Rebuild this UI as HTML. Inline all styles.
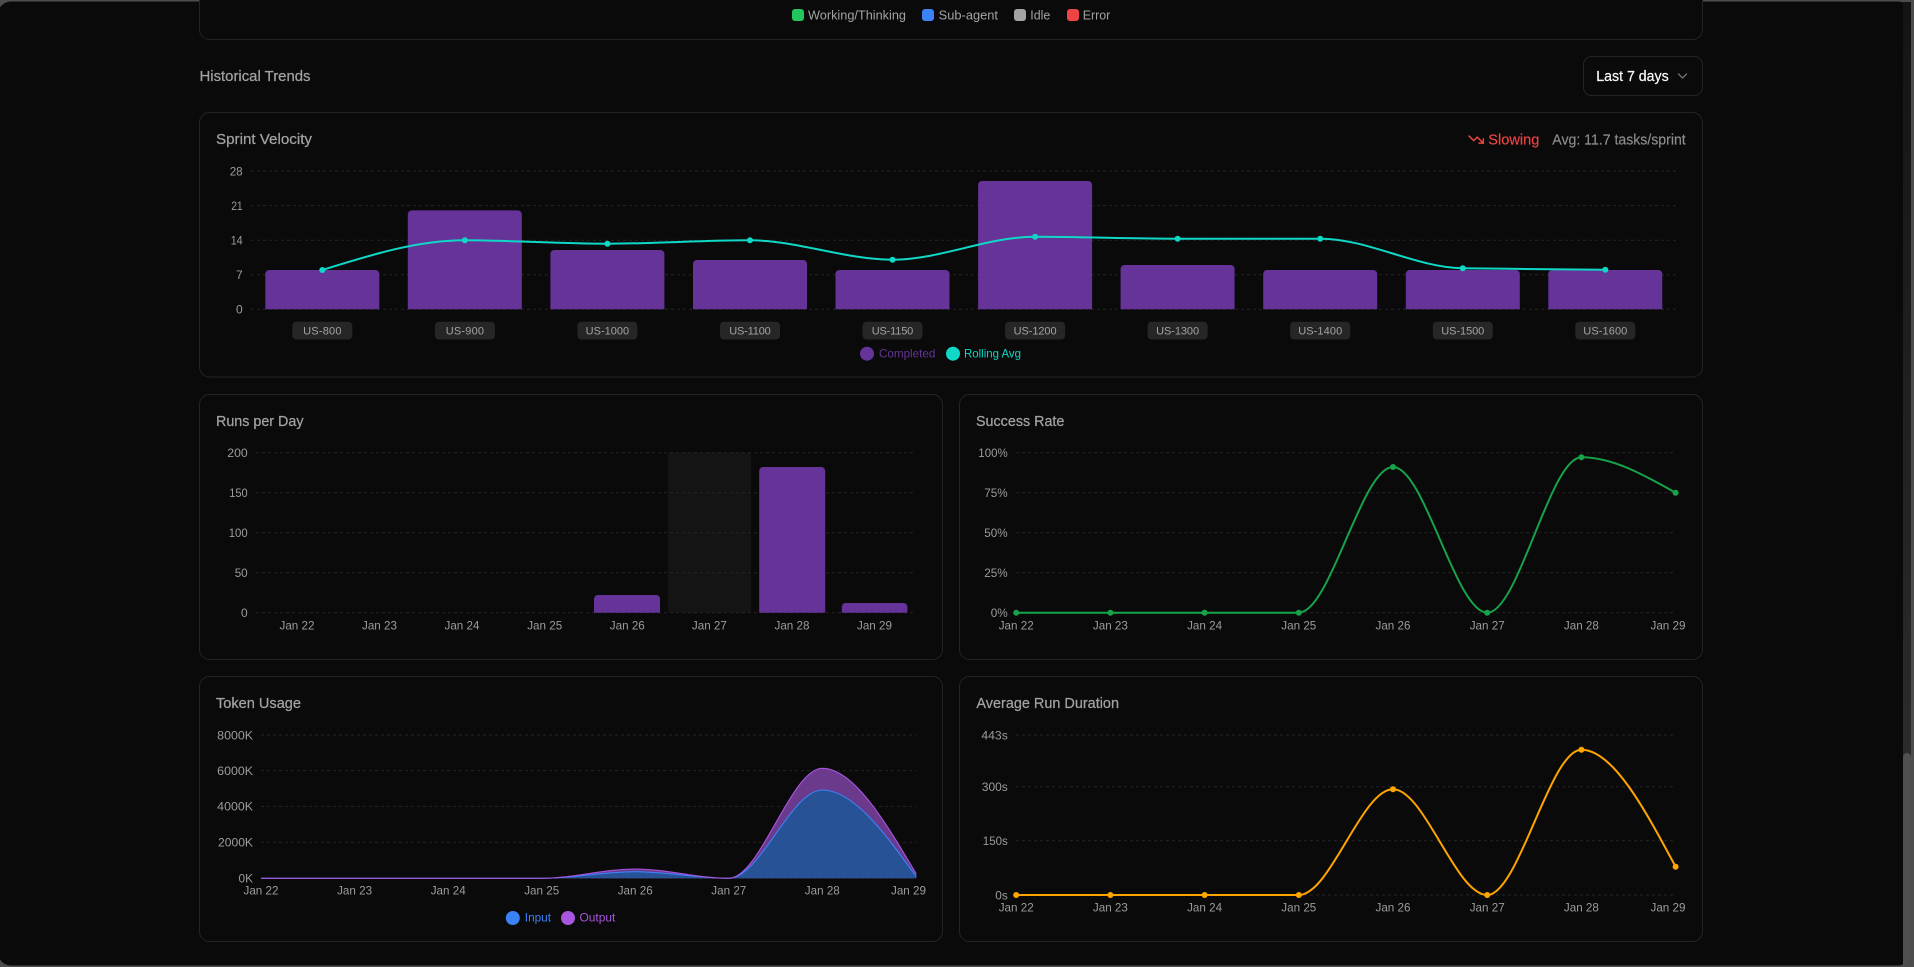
<!DOCTYPE html>
<html lang="en">
<head>
<meta charset="utf-8">
<title>Historical Trends</title>
<style>
html,body{margin:0;padding:0;background:#4d4d4d;width:1914px;height:967px;overflow:hidden}
svg{position:absolute;left:0;top:0;display:block}
text{font-family:"Liberation Sans",Arial,sans-serif}
.card{fill:#0a0a0a;stroke:#242424;stroke-width:1}
.grid{stroke:#252525;stroke-width:1;stroke-dasharray:3 3;fill:none}
.t{font-size:14.4px;fill:#a3a3a3;font-weight:400;stroke:#a3a3a3;stroke-width:.22px}
.ax{font-size:12px;fill:#9c9c9c}
.end{text-anchor:end}
.mid{text-anchor:middle}
.leg{font-size:12.6px;fill:#a3a3a3}
.pill{fill:#262626}
.pt{font-size:11px;fill:#a3a3a3;text-anchor:middle}
.lg{font-size:11.6px}
.bar{fill:#663399}
</style>
</head>
<body>
<svg width="1914" height="967" viewBox="0 0 1914 967" xmlns="http://www.w3.org/2000/svg">
<defs>
<clipPath id="c1"><rect x="200" y="150" width="1500" height="159.3"/></clipPath>
<clipPath id="c2"><rect x="200" y="440" width="740" height="172.7"/></clipPath>
<linearGradient id="tr" x1="0" y1="0" x2="0" y2="1"><stop offset="0" stop-color="#141414"/><stop offset="1" stop-color="#2b2b2b"/></linearGradient>
</defs>
<rect x="0" y="0" width="1914" height="967" fill="#4d4d4d"/>
<rect x="-2" y="1.5" width="1913" height="964" rx="13" fill="#0a0a0a"/>
<rect x="1903" y="2" width="8" height="755" fill="url(#tr)"/>
<path d="M1903,757 a4,4 0 0 1 8,0 V952 a13,13 0 0 1 -8,12.8 Z" fill="#505050"/>

<!-- Top card -->
<path class="card" d="M199.5,-10 V29.5 a10,10 0 0 0 10,10 H1692.5 a10,10 0 0 0 10,-10 V-10"/>
<rect x="792" y="9" width="12" height="12" rx="3" fill="#22c55e"/>
<text class="leg" x="808" y="19.4" textLength="98" lengthAdjust="spacingAndGlyphs">Working/Thinking</text>
<rect x="922" y="9" width="12" height="12" rx="3" fill="#3b82f6"/>
<text class="leg" x="938.7" y="19.4" textLength="59.3" lengthAdjust="spacingAndGlyphs">Sub-agent</text>
<rect x="1014" y="9" width="12" height="12" rx="3" fill="#a3a3a3"/>
<text class="leg" x="1030.3" y="19.4" textLength="20" lengthAdjust="spacingAndGlyphs">Idle</text>
<rect x="1067" y="9" width="12" height="12" rx="3" fill="#ef4444"/>
<text class="leg" x="1082.7" y="19.4" textLength="27.6" lengthAdjust="spacingAndGlyphs">Error</text>

<!-- Header -->
<text class="t" x="199.5" y="81" textLength="111" lengthAdjust="spacingAndGlyphs">Historical Trends</text>
<rect class="card" x="1583.5" y="56.5" width="119" height="39" rx="8"/>
<text x="1596.3" y="81" font-size="14.4" fill="#fafafa" stroke="#fafafa" stroke-width=".2" textLength="72.4" lengthAdjust="spacingAndGlyphs">Last 7 days</text>
<path d="M1678.5,74 l4,4 4,-4" fill="none" stroke="#737373" stroke-width="1.3" stroke-linecap="round" stroke-linejoin="round"/>

<!-- Sprint Velocity -->
<rect class="card" x="199.5" y="112.5" width="1503" height="264.5" rx="10"/>
<text class="t" x="216" y="144" textLength="96" lengthAdjust="spacingAndGlyphs">Sprint Velocity</text>
<g fill="none" stroke="#ef4444" stroke-width="1.5" stroke-linecap="round" stroke-linejoin="round">
<path d="M1469,136 L1473.7,140.65 L1477.25,137.1 L1483.3,143.15"/>
<path d="M1479,143.15 H1483.3 V138.9"/>
</g>
<text x="1488.3" y="144.5" font-size="14.4" fill="#ef4444" stroke="#ef4444" stroke-width=".15" textLength="51" lengthAdjust="spacingAndGlyphs">Slowing</text>
<text x="1552.3" y="144.5" font-size="14.4" fill="#8f8f8f" stroke="#8f8f8f" stroke-width=".15" textLength="133.4" lengthAdjust="spacingAndGlyphs">Avg: 11.7 tasks/sprint</text>

<g class="grid">
<path d="M251,171 H1676.6"/><path d="M251,205.6 H1676.6"/><path d="M251,240.2 H1676.6"/><path d="M251,274.8 H1676.6"/><path d="M251,309.3 H1676.6"/>
</g>
<g class="ax end">
<text x="242.7" y="175.3" textLength="13" lengthAdjust="spacingAndGlyphs">28</text>
<text x="242.7" y="210" textLength="11.5" lengthAdjust="spacingAndGlyphs">21</text>
<text x="242.7" y="244.6" textLength="12" lengthAdjust="spacingAndGlyphs">14</text>
<text x="242.7" y="279.2">7</text>
<text x="242.7" y="313.7">0</text>
</g>
<g class="bar" clip-path="url(#c1)">
<rect x="265.3" y="270" width="114" height="60" rx="4"/>
<rect x="407.8" y="210.4" width="114" height="120" rx="4"/>
<rect x="550.4" y="250" width="114" height="80" rx="4"/>
<rect x="693" y="260" width="114" height="70" rx="4"/>
<rect x="835.5" y="270" width="114" height="60" rx="4"/>
<rect x="978.1" y="181" width="114" height="150" rx="4"/>
<rect x="1120.6" y="265" width="114" height="60" rx="4"/>
<rect x="1263.2" y="270" width="114" height="60" rx="4"/>
<rect x="1405.8" y="270" width="114" height="60" rx="4"/>
<rect x="1548.3" y="270" width="114" height="60" rx="4"/>
</g>
<path d="M322.28,270 C369.8,255.15 417.32,240.3 464.84,240.3 C512.36,240.3 559.88,243.7 607.4,243.7 C654.92,243.7 702.44,240.3 749.96,240.3 C797.48,240.3 845,259.7 892.52,259.7 C940.04,259.7 987.56,236.7 1035.08,236.7 C1082.6,236.7 1130.12,238.7 1177.64,238.7 C1225.16,238.7 1272.68,238.7 1320.2,238.7 C1367.72,238.7 1415.24,267.37 1462.76,268.3 C1510.28,268.77 1557.8,269.47 1605.32,269.7" fill="none" stroke="#0fd8c6" stroke-width="2"/>
<g fill="#0fd8c6">
<circle cx="322.28" cy="270" r="3"/><circle cx="464.84" cy="240.3" r="3"/><circle cx="607.4" cy="243.7" r="3"/><circle cx="749.96" cy="240.3" r="3"/><circle cx="892.52" cy="259.7" r="3"/><circle cx="1035.08" cy="236.7" r="3"/><circle cx="1177.64" cy="238.7" r="3"/><circle cx="1320.2" cy="238.7" r="3"/><circle cx="1462.76" cy="268.3" r="3"/><circle cx="1605.32" cy="269.7" r="3"/>
</g>
<g class="pill">
<rect x="292.3" y="321.7" width="60" height="17.8" rx="4"/><rect x="434.9" y="321.7" width="60" height="17.8" rx="4"/><rect x="577.4" y="321.7" width="60" height="17.8" rx="4"/><rect x="720" y="321.7" width="60" height="17.8" rx="4"/><rect x="862.5" y="321.7" width="60" height="17.8" rx="4"/><rect x="1005.1" y="321.7" width="60" height="17.8" rx="4"/><rect x="1147.6" y="321.7" width="60" height="17.8" rx="4"/><rect x="1290.2" y="321.7" width="60" height="17.8" rx="4"/><rect x="1432.8" y="321.7" width="60" height="17.8" rx="4"/><rect x="1575.3" y="321.7" width="60" height="17.8" rx="4"/>
</g>
<text class="pt" x="322.3" y="334.4" textLength="38.3" lengthAdjust="spacing">US-800</text>
<text class="pt" x="464.9" y="334.4" textLength="38.3" lengthAdjust="spacing">US-900</text>
<text class="pt" x="607.4" y="334.4" textLength="43.5" lengthAdjust="spacing">US-1000</text>
<text class="pt" x="750" y="334.4" textLength="41.5" lengthAdjust="spacing">US-1100</text>
<text class="pt" x="892.5" y="334.4" textLength="41.5" lengthAdjust="spacing">US-1150</text>
<text class="pt" x="1035.1" y="334.4" textLength="43" lengthAdjust="spacing">US-1200</text>
<text class="pt" x="1177.6" y="334.4" textLength="43" lengthAdjust="spacing">US-1300</text>
<text class="pt" x="1320.2" y="334.4" textLength="44" lengthAdjust="spacing">US-1400</text>
<text class="pt" x="1462.8" y="334.4" textLength="43" lengthAdjust="spacing">US-1500</text>
<text class="pt" x="1605.3" y="334.4" textLength="44" lengthAdjust="spacing">US-1600</text>
<circle cx="867" cy="353.7" r="7" fill="#663399"/>
<text class="lg" x="879" y="357.4" fill="#663399" textLength="56.3" lengthAdjust="spacingAndGlyphs">Completed</text>
<circle cx="953" cy="353.7" r="7" fill="#0fd8c6"/>
<text class="lg" x="964" y="357.4" fill="#0fd8c6" textLength="57" lengthAdjust="spacingAndGlyphs">Rolling Avg</text>

<!-- Runs per Day -->
<rect class="card" x="199.5" y="394.5" width="743" height="265" rx="10"/>
<text class="t" x="216" y="426" textLength="87.5" lengthAdjust="spacingAndGlyphs">Runs per Day</text>
<rect x="668" y="452.7" width="83" height="160" fill="#141414"/>
<g class="grid">
<path d="M256,452.7 H914"/><path d="M256,492.7 H914"/><path d="M256,532.7 H914"/><path d="M256,572.7 H914"/><path d="M256,612.7 H914"/>
</g>
<g class="ax end">
<text x="247.7" y="457" textLength="20.4" lengthAdjust="spacingAndGlyphs">200</text>
<text x="247.7" y="497" textLength="18.4" lengthAdjust="spacingAndGlyphs">150</text>
<text x="247.7" y="537" textLength="19" lengthAdjust="spacingAndGlyphs">100</text>
<text x="247.7" y="577" textLength="13" lengthAdjust="spacingAndGlyphs">50</text>
<text x="247.7" y="617">0</text>
</g>
<g class="bar" clip-path="url(#c2)">
<rect x="594" y="595" width="66" height="30" rx="4"/>
<rect x="759.2" y="467" width="66" height="160" rx="4"/>
<rect x="841.8" y="603" width="65.6" height="30" rx="4"/>
</g>
<g class="ax mid">
<text x="297" y="629.3" textLength="35" lengthAdjust="spacingAndGlyphs">Jan 22</text>
<text x="379.5" y="629.3" textLength="35" lengthAdjust="spacingAndGlyphs">Jan 23</text>
<text x="462" y="629.3" textLength="35" lengthAdjust="spacingAndGlyphs">Jan 24</text>
<text x="544.7" y="629.3" textLength="35" lengthAdjust="spacingAndGlyphs">Jan 25</text>
<text x="627.3" y="629.3" textLength="35" lengthAdjust="spacingAndGlyphs">Jan 26</text>
<text x="709.4" y="629.3" textLength="35" lengthAdjust="spacingAndGlyphs">Jan 27</text>
<text x="792" y="629.3" textLength="35" lengthAdjust="spacingAndGlyphs">Jan 28</text>
<text x="874.5" y="629.3" textLength="35" lengthAdjust="spacingAndGlyphs">Jan 29</text>
</g>

<!-- Success Rate -->
<rect class="card" x="959.5" y="394.5" width="743" height="265" rx="10"/>
<text class="t" x="976" y="426" textLength="88.4" lengthAdjust="spacingAndGlyphs">Success Rate</text>
<g class="grid">
<path d="M1016.2,452.7 H1675"/><path d="M1016.2,492.7 H1675"/><path d="M1016.2,532.7 H1675"/><path d="M1016.2,572.7 H1675"/><path d="M1016.2,612.7 H1675"/>
</g>
<g class="ax end">
<text x="1007.7" y="457" textLength="29.4" lengthAdjust="spacingAndGlyphs">100%</text>
<text x="1007.7" y="497" textLength="23.4" lengthAdjust="spacingAndGlyphs">75%</text>
<text x="1007.7" y="537" textLength="23.4" lengthAdjust="spacingAndGlyphs">50%</text>
<text x="1007.7" y="577" textLength="23.4" lengthAdjust="spacingAndGlyphs">25%</text>
<text x="1007.7" y="617" textLength="17" lengthAdjust="spacingAndGlyphs">0%</text>
</g>
<path d="M1016.2,612.7 L1298.8,612.7 C1330.2,612.7 1361.6,467 1393,467 C1424.4,467 1455.8,612.7 1487.2,612.7 C1518.6,612.7 1550,457.3 1581.4,457.3 C1612.8,457.3 1644.2,475 1675.6,492.7" fill="none" stroke="#16a34a" stroke-width="2"/>
<g fill="#16a34a">
<circle cx="1016.2" cy="612.7" r="3"/><circle cx="1110.4" cy="612.7" r="3"/><circle cx="1204.6" cy="612.7" r="3"/><circle cx="1298.8" cy="612.7" r="3"/><circle cx="1393" cy="467" r="3"/><circle cx="1487.2" cy="612.7" r="3"/><circle cx="1581.4" cy="457.3" r="3"/><circle cx="1675.6" cy="492.7" r="3"/>
</g>
<g class="ax mid">
<text x="1016.2" y="629.3" textLength="35" lengthAdjust="spacingAndGlyphs">Jan 22</text>
<text x="1110.4" y="629.3" textLength="35" lengthAdjust="spacingAndGlyphs">Jan 23</text>
<text x="1204.6" y="629.3" textLength="35" lengthAdjust="spacingAndGlyphs">Jan 24</text>
<text x="1298.8" y="629.3" textLength="35" lengthAdjust="spacingAndGlyphs">Jan 25</text>
<text x="1393" y="629.3" textLength="35" lengthAdjust="spacingAndGlyphs">Jan 26</text>
<text x="1487.2" y="629.3" textLength="35" lengthAdjust="spacingAndGlyphs">Jan 27</text>
<text x="1581.4" y="629.3" textLength="35" lengthAdjust="spacingAndGlyphs">Jan 28</text>
<text x="1668" y="629.3" textLength="35" lengthAdjust="spacingAndGlyphs">Jan 29</text>
</g>

<!-- Token Usage -->
<rect class="card" x="199.5" y="676.5" width="743" height="265" rx="10"/>
<text class="t" x="216" y="708" textLength="85" lengthAdjust="spacingAndGlyphs">Token Usage</text>
<g class="grid">
<path d="M261,735 H916.3"/><path d="M261,770.6 H916.3"/><path d="M261,806.4 H916.3"/><path d="M261,842.3 H916.3"/><path d="M261,878.3 H916.3"/>
</g>
<g class="ax end">
<text x="253" y="739.3" textLength="35.8" lengthAdjust="spacingAndGlyphs">8000K</text>
<text x="253" y="775" textLength="35.8" lengthAdjust="spacingAndGlyphs">6000K</text>
<text x="253" y="810.7" textLength="35.8" lengthAdjust="spacingAndGlyphs">4000K</text>
<text x="253" y="846.6" textLength="35" lengthAdjust="spacingAndGlyphs">2000K</text>
<text x="253" y="882.6" textLength="14.5" lengthAdjust="spacingAndGlyphs">0K</text>
</g>
<path d="M261,878.3 L541.7,878.3 C572.9,878.3 604,869 635.2,869 C666.4,869 697.6,878.3 728.8,878.3 C760,878.3 791.1,768.3 822.3,768.3 C853.6,768.3 885,821.15 916.3,874 V878.3 H261 Z" fill="#6b3a8c"/>
<path d="M261,878.3 L541.7,878.3 C572.9,878.3 604,871.7 635.2,871.7 C666.4,871.7 697.6,878.3 728.8,878.3 C760,878.3 791.1,790 822.3,790 C853.6,790 885,833.35 916.3,876.7 V878.3 H261 Z" fill="#275296"/>
<path d="M261,878.3 L541.7,878.3 C572.9,878.3 604,871.7 635.2,871.7 C666.4,871.7 697.6,878.3 728.8,878.3 C760,878.3 791.1,790 822.3,790 C853.6,790 885,833.35 916.3,876.7" fill="none" stroke="#3b82f6" stroke-width="1.1"/>
<path d="M261,878.3 L541.7,878.3 C572.9,878.3 604,869 635.2,869 C666.4,869 697.6,878.3 728.8,878.3 C760,878.3 791.1,768.3 822.3,768.3 C853.6,768.3 885,821.15 916.3,874" fill="none" stroke="#a855e0" stroke-width="1.1"/>
<g class="ax mid">
<text x="261" y="894.3" textLength="35" lengthAdjust="spacingAndGlyphs">Jan 22</text>
<text x="354.6" y="894.3" textLength="35" lengthAdjust="spacingAndGlyphs">Jan 23</text>
<text x="448.2" y="894.3" textLength="35" lengthAdjust="spacingAndGlyphs">Jan 24</text>
<text x="541.7" y="894.3" textLength="35" lengthAdjust="spacingAndGlyphs">Jan 25</text>
<text x="635.2" y="894.3" textLength="35" lengthAdjust="spacingAndGlyphs">Jan 26</text>
<text x="728.8" y="894.3" textLength="35" lengthAdjust="spacingAndGlyphs">Jan 27</text>
<text x="822.3" y="894.3" textLength="35" lengthAdjust="spacingAndGlyphs">Jan 28</text>
<text x="908.5" y="894.3" textLength="35" lengthAdjust="spacingAndGlyphs">Jan 29</text>
</g>
<circle cx="512.8" cy="918" r="7" fill="#3b82f6"/>
<text class="lg" x="524.8" y="921.7" fill="#3b82f6" textLength="26.2" lengthAdjust="spacingAndGlyphs">Input</text>
<circle cx="568" cy="918" r="7" fill="#a855e0"/>
<text class="lg" x="579.5" y="921.7" fill="#a855e0" textLength="35.8" lengthAdjust="spacingAndGlyphs">Output</text>

<!-- Average Run Duration -->
<rect class="card" x="959.5" y="676.5" width="743" height="265" rx="10"/>
<text class="t" x="976.4" y="708" textLength="142.6" lengthAdjust="spacingAndGlyphs">Average Run Duration</text>
<g class="grid">
<path d="M1016,735 H1675"/><path d="M1016,786.7 H1675"/><path d="M1016,840.7 H1675"/><path d="M1016,895 H1675"/>
</g>
<g class="ax end">
<text x="1007.8" y="739.3" textLength="26.4" lengthAdjust="spacingAndGlyphs">443s</text>
<text x="1007.8" y="791" textLength="26" lengthAdjust="spacingAndGlyphs">300s</text>
<text x="1007.8" y="845" textLength="25" lengthAdjust="spacingAndGlyphs">150s</text>
<text x="1007.8" y="899.3" textLength="12.5" lengthAdjust="spacingAndGlyphs">0s</text>
</g>
<path d="M1016.2,895 L1298.8,895 C1330.2,895 1361.6,789.3 1393,789.3 C1424.4,789.3 1455.8,895 1487.2,895 C1518.6,895 1550,749.7 1581.4,749.7 C1612.8,749.7 1644.2,808.2 1675.6,866.7" fill="none" stroke="#ffa500" stroke-width="2"/>
<g fill="#ffa500">
<circle cx="1016.2" cy="895" r="3"/><circle cx="1110.4" cy="895" r="3"/><circle cx="1204.6" cy="895" r="3"/><circle cx="1298.8" cy="895" r="3"/><circle cx="1393" cy="789.3" r="3"/><circle cx="1487.2" cy="895" r="3"/><circle cx="1581.4" cy="749.7" r="3"/><circle cx="1675.6" cy="866.7" r="3"/>
</g>
<g class="ax mid">
<text x="1016.2" y="911.3" textLength="35" lengthAdjust="spacingAndGlyphs">Jan 22</text>
<text x="1110.4" y="911.3" textLength="35" lengthAdjust="spacingAndGlyphs">Jan 23</text>
<text x="1204.6" y="911.3" textLength="35" lengthAdjust="spacingAndGlyphs">Jan 24</text>
<text x="1298.8" y="911.3" textLength="35" lengthAdjust="spacingAndGlyphs">Jan 25</text>
<text x="1393" y="911.3" textLength="35" lengthAdjust="spacingAndGlyphs">Jan 26</text>
<text x="1487.2" y="911.3" textLength="35" lengthAdjust="spacingAndGlyphs">Jan 27</text>
<text x="1581.4" y="911.3" textLength="35" lengthAdjust="spacingAndGlyphs">Jan 28</text>
<text x="1668" y="911.3" textLength="35" lengthAdjust="spacingAndGlyphs">Jan 29</text>
</g>
</svg>
</body>
</html>
